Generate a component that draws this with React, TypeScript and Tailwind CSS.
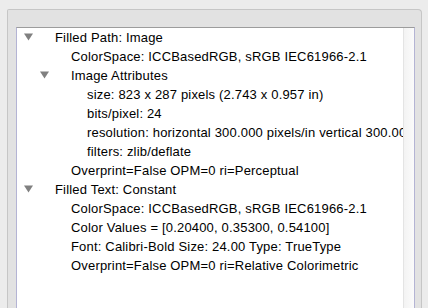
import React from 'react';

type Row = { level: number; text: string; open?: boolean };

const rows: Row[] = [
  { level: 0, text: 'Filled Path: Image', open: true },
  { level: 1, text: 'ColorSpace: ICCBasedRGB, sRGB IEC61966-2.1' },
  { level: 1, text: 'Image Attributes', open: true },
  { level: 2, text: 'size: 823 x 287 pixels (2.743 x 0.957 in)' },
  { level: 2, text: 'bits/pixel: 24' },
  { level: 2, text: 'resolution: horizontal 300.000 pixels/in vertical 300.000 pixels/in' },
  { level: 2, text: 'filters: zlib/deflate' },
  { level: 1, text: 'Overprint=False OPM=0 ri=Perceptual' },
  { level: 0, text: 'Filled Text: Constant', open: true },
  { level: 1, text: 'ColorSpace: ICCBasedRGB, sRGB IEC61966-2.1' },
  { level: 1, text: 'Color Values = [0.20400, 0.35300, 0.54100]' },
  { level: 1, text: 'Font: Calibri-Bold Size: 24.00 Type: TrueType' },
  { level: 1, text: 'Overprint=False OPM=0 ri=Relative Colorimetric' },
];

const indent = ['pl-[38px]', 'pl-[54px]', 'pl-[70px]'];
const arrowAt = ['left-[7px]', 'left-[23px]', 'left-[39px]'];

function Disclosure({ level }: { level: number }) {
  // 展开状态的小三角
  return (
    <svg
      className={`absolute top-[5px] ${arrowAt[level]}`}
      width="9"
      height="8"
      viewBox="0 0 9 8"
    >
      <polygon points="0,0.5 9,0.5 4.5,7.5" fill="#808080" />
    </svg>
  );
}

export default function App() {
  return (
    <div
      className="w-[428px] h-[308px] overflow-hidden bg-[#ececec] pt-[9px] pl-[7px] pr-[6px]"
      style={{ fontFamily: '"Liberation Sans", Arial, sans-serif' }}
    >
      <div className="h-full border-t border-l border-r border-[#c6c6c6] rounded-tr-[4px] rounded-tl-[2px] bg-[#e2e2e2] pt-[17px] pl-[8px] pr-[6px]">
        <div className="h-full flex bg-white border-t border-t-[#9c9c9c] border-l border-r border-l-[#b4b4d4] border-r-[#b4b4d4]">
          <div className="flex-1 overflow-hidden">
            {rows.map((r, i) => (
              <div
                key={i}
                className={`relative h-[19px] leading-[19px] text-[13px] tracking-[0.18px] text-black whitespace-nowrap ${indent[r.level]}`}
              >
                {r.open && <Disclosure level={r.level} />}
                {r.text}
              </div>
            ))}
          </div>
          <div className="w-[11px] border-l border-[#e4e4e4] bg-gradient-to-r from-[#f3f3f3] to-[#fbfbfb]" />
        </div>
      </div>
    </div>
  );
}
